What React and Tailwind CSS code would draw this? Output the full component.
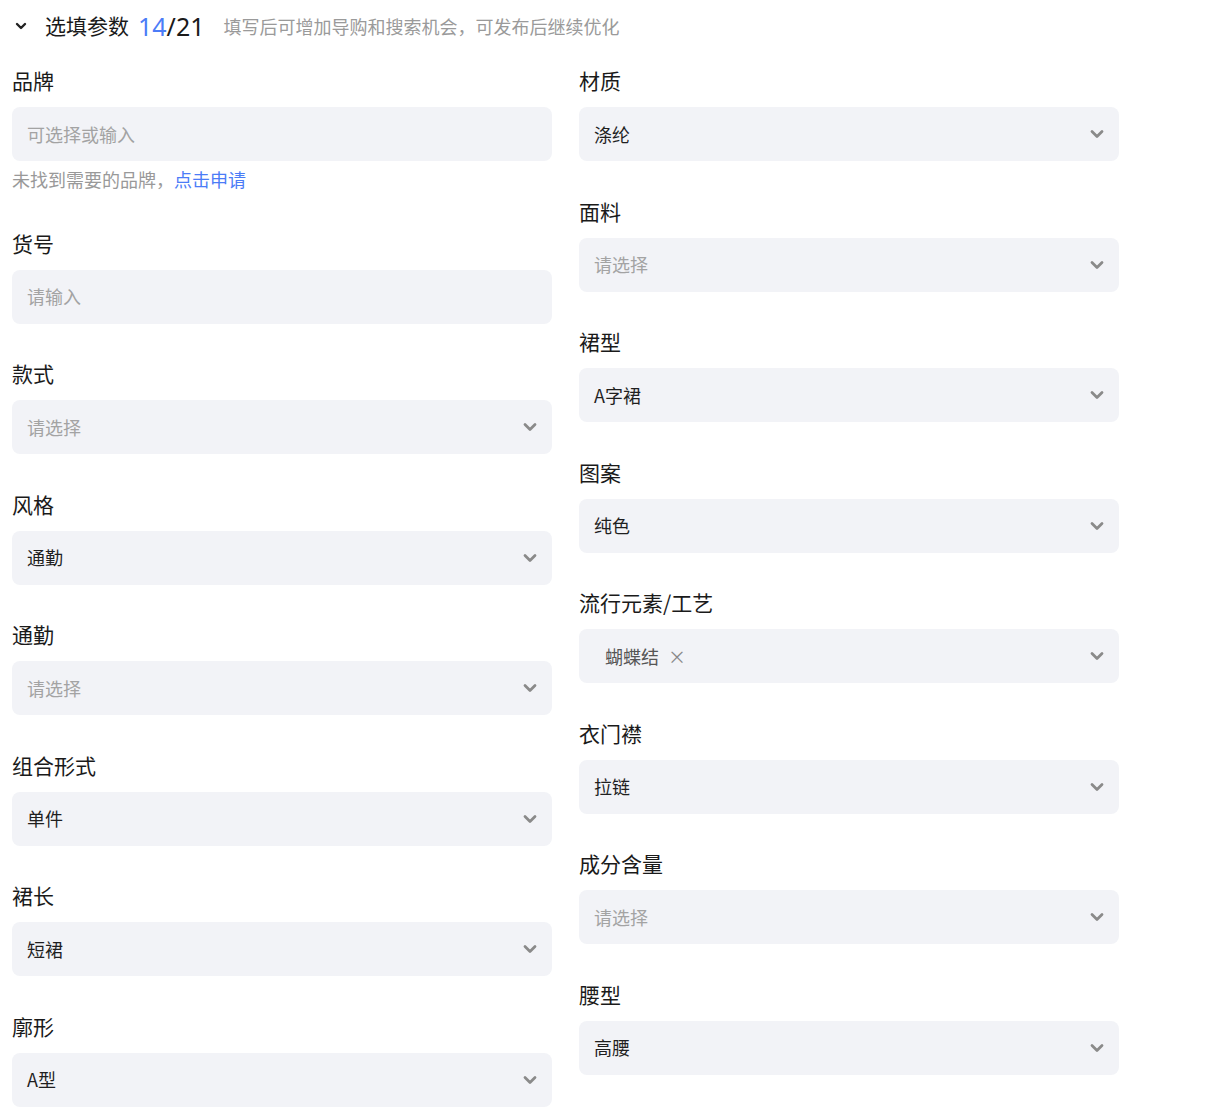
import React from 'react'

const font = { fontFamily: '"Noto Sans CJK SC", "Noto Sans", sans-serif' }

function Chevron({ className }){
  return (
    <svg className={className} width="14" height="10" viewBox="0 0 14 10" fill="none">
      <polyline points="2,2.5 7,7.5 12,2.5" stroke="currentColor" strokeWidth="2.8" strokeLinecap="round" strokeLinejoin="round" />
    </svg>
  )
}

function Field({ label, value, placeholder, select = true, tag, hint }){
  return (
    <div className="mb-[37.5px]">
      <div className="h-[28px] leading-[24px] text-[21px] text-[#1a1a1a] mb-[11px]">{label}</div>
      <div className="h-[54px] rounded-[8px] bg-[#f2f3f7] flex items-center pl-[15px] pr-[15px]">
        <div className="flex-1 text-[18px]">
          {tag ? (
            <span className="inline-flex items-center pl-[11px] text-[#555]">
              {tag}
              <span className="ml-[9px] text-[#888] text-[18px] leading-none">×</span>
            </span>
          ) : value ? (
            <span className="text-[#1f1f1f]">{value}</span>
          ) : (
            <span className="text-[#a3a3a3]">{placeholder}</span>
          )}
        </div>
        {select && <Chevron className="text-[#8a8a8a]" />}
      </div>
      {hint && (
        <div className="mt-[6px] h-[26px] leading-[24px] text-[18px] text-[#999]">
          未找到需要的品牌，<span className="text-[#4b7cf7]">点击申请</span>
        </div>
      )}
    </div>
  )
}

const left = [
  { label: '品牌', placeholder: '可选择或输入', select: false, hint: true },
  { label: '货号', placeholder: '请输入', select: false },
  { label: '款式', placeholder: '请选择' },
  { label: '风格', value: '通勤' },
  { label: '通勤', placeholder: '请选择' },
  { label: '组合形式', value: '单件' },
  { label: '裙长', value: '短裙' },
  { label: '廓形', value: 'A型' },
]

const right = [
  { label: '材质', value: '涤纶' },
  { label: '面料', placeholder: '请选择' },
  { label: '裙型', value: 'A字裙' },
  { label: '图案', value: '纯色' },
  { label: '流行元素/工艺', tag: '蝴蝶结' },
  { label: '衣门襟', value: '拉链' },
  { label: '成分含量', placeholder: '请选择' },
  { label: '腰型', value: '高腰' },
]

export default function App(){
  return (
    <div className="bg-white min-h-[1114px] px-[12px]" style={font}>
      <div className="h-[52px] flex items-center">
        <svg className="ml-[3px] text-[#222]" width="12" height="10" viewBox="0 0 12 10" fill="none">
          <polyline points="2,3 6,7 10,3" stroke="currentColor" strokeWidth="2.4" strokeLinecap="round" strokeLinejoin="round" />
        </svg>
        <span className="ml-[18px] text-[21px] text-[#1a1a1a]">选填参数</span>
        <span className="ml-[9px] text-[25px] leading-none" style={{ fontFamily: '"Noto Sans", sans-serif' }}>
          <span className="text-[#4b7cf7]">14</span><span className="text-[#1a1a1a]">/21</span>
        </span>
        <span className="ml-[19px] text-[18px] text-[#9a9a9a]">填写后可增加导购和搜索机会，可发布后继续优化</span>
      </div>
      <div className="grid grid-cols-[540px_540px] gap-x-[27px] pt-[16px]">
        <div>{left.map((f, i) => <Field key={i} {...f} />)}</div>
        <div>{right.map((f, i) => <Field key={i} {...f} />)}</div>
      </div>
    </div>
  )
}
